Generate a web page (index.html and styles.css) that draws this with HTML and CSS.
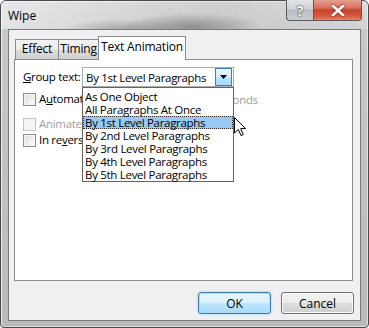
FILE: index.html
```html
<!DOCTYPE html>
<html>
<head>
<meta charset="utf-8">
<link rel="stylesheet" href="styles.css">
</head>
<body>
<div class="window">
  <div class="titlebar">
    <span class="title">Wipe</span>
    <div class="caption-btns">
      <div class="cap help">?</div>
      <div class="cap close"><svg width="14" height="11" viewBox="0 0 14 11"><path d="M2 1 L12 10 M12 1 L2 10" stroke="#fff" stroke-width="2.6" stroke-linecap="square"/></svg></div>
    </div>
  </div>
  <div class="client">
    <div class="tabs">
      <div class="tab tab-effect">Effect</div>
      <div class="tab tab-timing">Timing</div>
      <div class="tab active">Text Animation</div>
    </div>
    <div class="panel">
      <div class="group-row">
        <span class="label"><u>G</u>roup text:</span>
        <div class="combo">
          <span class="combo-text">By 1st Level Paragraphs</span>
          <div class="drop-btn"><svg width="7" height="4" viewBox="0 0 7 4"><path d="M0 0 H7 L3.5 4 Z" fill="#000"/></svg></div>
        </div>
      </div>
      <div class="check-row auto">
        <span class="cb"></span>
        <span class="cb-label auto-label">A<u>u</u>tomatically after</span>
        <div class="spin">0</div>
        <span class="dim secs">seconds</span>
      </div>
      <div class="check-row">
        <span class="cb disabled"></span>
        <span class="cb-label dim">Animate attached shape</span>
      </div>
      <div class="check-row">
        <span class="cb"></span>
        <span class="cb-label">In re<u>v</u>erse order</span>
      </div>

      <div class="listbox">
        <div class="item">As One Object</div>
        <div class="item">All Paragraphs At Once</div>
        <div class="item selected">By 1st Level Paragraphs</div>
        <div class="item">By 2nd Level Paragraphs</div>
        <div class="item">By 3rd Level Paragraphs</div>
        <div class="item">By 4th Level Paragraphs</div>
        <div class="item">By 5th Level Paragraphs</div>
      </div>
      <svg class="cursor" width="13" height="20" viewBox="0 0 13 20"><path d="M0.5 0.5 L0.5 16 L4.3 12.4 L7 18.6 L9.3 17.6 L6.7 11.6 L11.6 11.6 Z" fill="#fff" stroke="#000" stroke-width="1" stroke-linejoin="miter"/></svg>
    </div>
    <div class="buttons">
      <div class="btn ok">OK</div>
      <div class="btn">Cancel</div>
    </div>
  </div>
</div>
</body>
</html>
```

FILE: styles.css
```css
* { box-sizing: border-box; }
html, body { margin: 0; padding: 0; }
body {
  width: 369px;
  height: 328px;
  overflow: hidden;
  font-family: "Open Sans", "Noto Sans", sans-serif;
  font-size: 11.5px;
  letter-spacing: -0.3px;
  color: #000;
  background: #fff;
  white-space: nowrap;
}
u { text-decoration: underline; text-underline-offset: 1px; }

.window {
  width: 369px;
  height: 328px;
  border: 1px solid #4a4a4a;
  border-radius: 6px 6px 4px 4px;
  background:
    linear-gradient(to right, rgba(255,255,255,0.35), rgba(0,0,0,0) 2px, rgba(0,0,0,0) 100%),
    linear-gradient(to bottom, #cfd1d3 0, #c6c8ca 30px, #b8babc 100%);
  box-shadow: inset 0 0 0 1px rgba(255,255,255,0.55);
  display: flex;
  flex-direction: column;
}

.titlebar {
  height: 28px;
  flex: none;
  display: flex;
  justify-content: space-between;
  align-items: flex-start;
  background:
    radial-gradient(ellipse 70px 14px at 190px 26px, rgba(70,70,70,0.45), rgba(0,0,0,0)),
    radial-gradient(ellipse 60px 10px at 120px 28px, rgba(90,90,90,0.35), rgba(0,0,0,0)),
    linear-gradient(to right, rgba(255,255,255,0.5), rgba(255,255,255,0.1) 45%, rgba(255,255,255,0) 60%, rgba(255,255,255,0.2));
  border-radius: 5px 5px 0 0;
}
.title {
  padding: 7px 0 0 7px;
  font-size: 12px;
  line-height: 16px;
  letter-spacing: 0;
}
.caption-btns {
  display: flex;
  margin-right: 6px;
  margin-top: -1px;
}
.cap {
  height: 21px;
  display: flex;
  align-items: center;
  justify-content: center;
  border: 1px solid #5a5a5a;
  border-top: none;
}
.help {
  width: 27px;
  border-radius: 0 0 0 4px;
  border-right: none;
  background: linear-gradient(to bottom, #e3e5e8 0, #cfd2d6 45%, #b9bdc2 50%, #c9cdd1 100%);
  color: #fff;
  font-weight: bold;
  font-size: 14px;
  text-shadow: 0 0 2px #333, 0 0 1px #333;
}
.close {
  width: 49px;
  border-radius: 0 0 4px 0;
  background: linear-gradient(to bottom, #e6a091 0, #d7705c 40%, #c7452d 50%, #d65a3c 80%, #e8836a 100%);
}
.close svg { filter: drop-shadow(0 0 1px #6a1a10); }

.client {
  margin: 0 7px;
  height: 292px;
  background: #f0f0f0;
  border: 1px solid #7a7a7a;
  display: flex;
  flex-direction: column;
}

.tabs {
  display: flex;
  align-items: flex-end;
  height: 30px;
  flex: none;
  padding-left: 6px;
  position: relative;
  z-index: 2;
  margin-bottom: -1px;
}
.tab {
  height: 20px;
  border: 1px solid #898c95;
  border-bottom: none;
  background: linear-gradient(to bottom, #f2f2f2 0, #ebebeb 50%, #dddddd 51%, #cfcfcf 100%);
  display: flex;
  justify-content: center;
  font-size: 12px;
  letter-spacing: -0.2px;
  line-height: 18px;
  margin-left: -1px;
  margin-bottom: 1px;
}
.tab-effect { width: 44px; margin-left: 0; }
.tab-timing { width: 41px; }
.tab.active {
  width: 88px;
  height: 24px;
  background: #fff;
  margin-bottom: 0;
  line-height: 20px;
  margin-left: -1px;
}

.panel {
  position: relative;
  flex: none;
  margin-left: 5px;
  width: 339px;
  height: 222px;
  background: #fff;
  border: 1px solid #898c95;
  padding: 7px 0 0 8px;
}

.group-row {
  display: flex;
  align-items: center;
  height: 20px;
}
.label {
  width: 59px;
  line-height: 16px;
}
.combo {
  width: 152px;
  height: 20px;
  border: 1px solid #acacac;
  display: flex;
  align-items: center;
  justify-content: space-between;
  padding-left: 3px;
  background: #fff;
}
.drop-btn {
  width: 17px;
  height: 18px;
  margin-right: 1px;
  border: 1px solid #3c7fb1;
  background: linear-gradient(to bottom, #eaf6fd 0, #d9f0fc 50%, #bee6fd 51%, #a7d9f5 100%);
  display: flex;
  align-items: center;
  justify-content: center;
}

.check-row {
  display: flex;
  align-items: center;
  height: 16px;
}
.check-row.auto {
  height: 22px;
  margin-top: 1px;
  margin-bottom: 6px;
}
.cb {
  width: 13px;
  height: 13px;
  border: 1px solid #8e8f8f;
  background: linear-gradient(135deg, #dcdcdc 0, #f4f4f4 70%, #ffffff 100%);
  box-shadow: inset 0 0 0 1px #f4f4f4;
  margin-right: 3px;
  flex: none;
}
.cb.disabled {
  border-color: #c5c5c5;
  background: #f4f4f4;
}
.cb-label { line-height: 16px; }
.auto-label { width: 110px; flex: none; }
.dim { color: #a0a0a0; }
.spin {
  width: 62px;
  height: 20px;
  border: 1px solid #c5c5c5;
  flex: none;
}
.secs { margin-left: 5px; }

.listbox {
  position: absolute;
  left: 67px;
  top: 27px;
  width: 152px;
  height: 95px;
  border: 1px solid #646464;
  background: #fff;
  padding: 2px 0 0 0;
  z-index: 3;
}
.item {
  height: 13px;
  line-height: 13px;
  padding-left: 2px;
}
.item.selected {
  background: #99c9f3;
  outline: 1px dotted #333;
  outline-offset: -1px;
}
.cursor {
  position: absolute;
  left: 219px;
  top: 57px;
  z-index: 4;
}

.buttons {
  display: flex;
  justify-content: flex-end;
  gap: 10px;
  padding-right: 6px;
  margin-top: 11px;
}
.btn {
  width: 73px;
  height: 22px;
  border: 1px solid #707070;
  border-radius: 3px;
  background: linear-gradient(to bottom, #f2f2f2 0, #ebebeb 50%, #dddddd 51%, #cfcfcf 100%);
  box-shadow: inset 0 0 0 1px #fcfcfc;
  display: flex;
  align-items: center;
  justify-content: center;
  font-size: 12px;
  letter-spacing: 0;
}
.btn.ok {
  border-color: #3c7fb1;
  background: linear-gradient(to bottom, #eaf6fd 0, #d9f0fc 50%, #bee6fd 51%, #a7d9f5 100%);
  box-shadow: inset 0 0 0 1px #a8dcf8, 0 0 2px #7ec4ee;
}
```
